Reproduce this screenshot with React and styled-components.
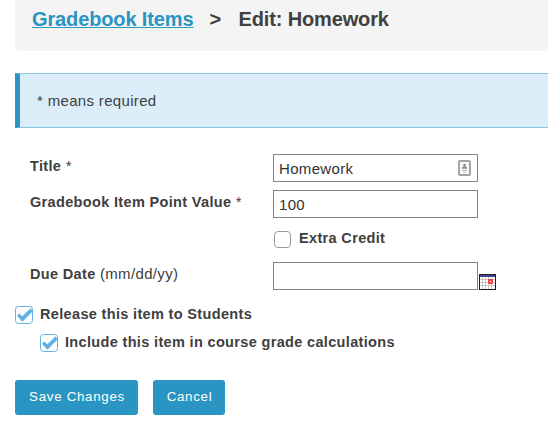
import React from "react";
import styled, { createGlobalStyle } from "styled-components";

const GlobalStyle = createGlobalStyle`
  *, *::before, *::after { box-sizing: border-box; }
  body {
    margin: 0;
    background: #fff;
    color: #404040;
    font: 14.5px/20px "Liberation Sans", Arial, sans-serif;
    overflow: hidden;
  }
`;

const Page = styled.main`
  padding-left: 15px;
  height: 440px;
  display: flex;
  flex-direction: column;
  overflow: hidden;
`;

const Breadcrumb = styled.header`
  flex: none;
  height: 51px;
  padding: 7px 0 0 17px;
  display: flex;
  align-items: flex-start;
  background: #f4f4f4;
  border-bottom-left-radius: 4px;
  font-size: 20px;
  font-weight: bold;
  line-height: 24px;
  letter-spacing: -0.13px;
  white-space: pre;
`;

const CrumbLink = styled.a`
  color: #2a94c2;
  text-decoration: underline;
  text-decoration-thickness: 1px;
  text-underline-offset: 1px;
  text-decoration-skip-ink: none;
`;

const Separator = styled.span`
  width: 45px;
  padding-left: 16px;
`;

const Notice = styled.div`
  flex: none;
  height: 55px;
  margin-top: 22px;
  padding: 17px 0 0 17px;
  background: #daedf8;
  border: solid #85c5e3;
  border-width: 1px 0;
  border-left: 5px solid #2a94c2;
  font-size: 15px;
  letter-spacing: 0.33px;
`;

const Fields = styled.div`
  flex: none;
  margin-top: 26px;
  padding-left: 15px;
  display: grid;
  grid-template-columns: 243px 1fr;
  grid-auto-rows: 28px;
  row-gap: 8px;
`;

const Label = styled.label`
  grid-column: 1;
  padding-top: 2px;
  font-weight: bold;
  letter-spacing: 0.34px;
  white-space: nowrap;
`;

const Light = styled.span`
  font-size: 15px;
  font-weight: normal;
  line-height: 1;
`;

const Control = styled.div`
  grid-column: 2;
  display: flex;
  align-items: flex-end;
  gap: 1px;
`;

const InputBox = styled.div`
  width: 205px;
  height: 28px;
  padding: 0 6px 0 5px;
  display: flex;
  align-items: center;
  justify-content: space-between;
  border: 1px solid #858585;
`;

const Input = styled.input`
  width: 160px;
  height: 24px;
  margin-top: 1px;
  padding: 0;
  border: 0;
  outline: 0;
  background: transparent;
  color: #333;
  font: 15px "Liberation Sans", Arial, sans-serif;
  letter-spacing: 0.33px;
`;

const CheckLine = styled.label`
  display: flex;
  align-items: flex-start;
  gap: 8px;
  height: 28px;
  padding-left: 1px;
  font-weight: bold;
  letter-spacing: 0.34px;
  white-space: nowrap;
`;

const CheckText = styled.span`
  padding-top: 2px;
`;

const EmptyBox = styled.span`
  width: 17px;
  height: 17px;
  margin-top: 5px;
  border: 1px solid #9a9a9a;
  border-radius: 4px;
`;

const Options = styled.div`
  flex: none;
  margin-top: 14px;
  display: flex;
  flex-direction: column;
`;

const Option = styled.label`
  height: 28px;
  margin-left: ${(p) => (p.$nested ? "25px" : "0")};
  padding-top: 2px;
  display: flex;
  align-items: flex-start;
  gap: 7px;
  font-weight: bold;
  letter-spacing: 0.34px;
  white-space: nowrap;
`;

const OptionText = styled.span`
  margin-top: -2px;
`;

const Actions = styled.div`
  display: flex;
  gap: 15px;
  margin-top: 20px;
`;

const Button = styled.button`
  width: ${(p) => p.$width};
  height: 35px;
  padding: 0 0 2px 1px;
  border: 0;
  border-radius: 3px;
  background: #2a94c2;
  color: #fff;
  font: 13.33px "Liberation Sans", Arial, sans-serif;
  letter-spacing: 0.7px;
  white-space: nowrap;
`;

const Icon = styled.svg`
  display: block;
  flex: none;
`;

const CheckedBox = () => (
  <Icon width="18" height="18" viewBox="0 0 18 18">
    <rect x="0.5" y="0.5" width="17" height="17" rx="3" fill="#fff" stroke="#62b1de" />
    <path d="M2 9.7L4.4 7.6L7.3 10.3L15.3 2.4L17.5 4.5V5.5L7.4 15.7Z" fill="#5eb2e4" />
  </Icon>
);

const ContactIcon = () => (
  <Icon width="13" height="16" viewBox="0 0 13 16">
    <rect x="1" y="1" width="11" height="14" rx="1" fill="#fafafa" stroke="#a3a5a5" strokeWidth="2" />
    <circle cx="6.5" cy="5" r="1.3" fill="#858787" />
    <path d="M4 8.7V7.6Q6.5 5 9 7.6V8.7Z" fill="#858787" />
    <path d="M4 10.5H9M5 12H8" stroke="#c0c0c0" />
  </Icon>
);

const CalendarIcon = () => (
  <Icon width="17" height="16" viewBox="0 0 17 16" shapeRendering="crispEdges">
    <rect width="17" height="16" fill="#202020" />
    <rect x="1" y="1" width="15" height="2" fill="#404497" />
    <rect x="1" y="3" width="15" height="12" fill="#fff" />
    <path
      d="M1 5.5H16M1 8.5H16M1 11.5H16M3.5 3V15M6.5 3V15M9.5 3V15M12.5 3V15"
      stroke="#c9c9c9"
    />
    <rect x="10" y="6" width="3" height="3" fill="#fff" stroke="#f34848" strokeWidth="2" />
  </Icon>
);

export default function App() {
  return (
    <>
      <GlobalStyle />
      <Page>
        <Breadcrumb>
          <CrumbLink>Gradebook Items</CrumbLink>
          <Separator>&gt;</Separator>
          <span>Edit: Homework</span>
        </Breadcrumb>
        <Notice>* means required</Notice>
        <Fields>
          <Label>Title <Light>*</Light></Label>
          <Control>
            <InputBox>
              <Input defaultValue="Homework" />
              <ContactIcon />
            </InputBox>
          </Control>
          <Label>Gradebook Item Point Value <Light>*</Light></Label>
          <Control>
            <InputBox>
              <Input defaultValue="100" />
            </InputBox>
          </Control>
          <Control>
            <CheckLine>
              <EmptyBox />
              <CheckText>Extra Credit</CheckText>
            </CheckLine>
          </Control>
          <Label>Due Date <Light>(mm/dd/yy)</Light></Label>
          <Control>
            <InputBox>
              <Input defaultValue="" />
            </InputBox>
            <CalendarIcon />
          </Control>
        </Fields>
        <Options>
          <Option>
            <CheckedBox />
            <OptionText>Release this item to Students</OptionText>
          </Option>
          <Option $nested>
            <CheckedBox />
            <OptionText>Include this item in course grade calculations</OptionText>
          </Option>
        </Options>
        <Actions>
          <Button $width="123px">Save Changes</Button>
          <Button $width="72px">Cancel</Button>
        </Actions>
      </Page>
    </>
  );
}
